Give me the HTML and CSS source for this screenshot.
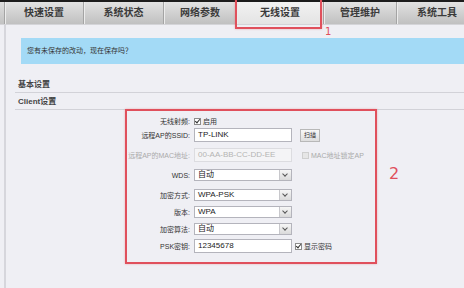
FILE: index.html
```html
<!DOCTYPE html>
<html>
<head>
    <meta charset="utf-8">
    <title>无线设置</title>
    <link rel="stylesheet" href="styles.css">
</head>
<body>
    <div class="topline"></div>
    <div class="tabs">
        <div class="tab t1">快速设置</div>
        <div class="tab t2">系统状态</div>
        <div class="tab t3">网络参数</div>
        <div class="tab t4 active">无线设置</div>
        <div class="tab t5">管理维护</div>
        <div class="tab t6">系统工具</div>
    </div>
    <div class="page">
        <div class="notice">您有未保存的改动，现在保存吗？</div>
        <div class="sec first">基本设置</div>
        <div class="sec">Client设置</div>
        <div class="form">
            <div class="row r1">
                <label>无线射频:</label>
                <span class="check on"></span><span class="txt">启用</span>
            </div>
            <div class="row r2">
                <label>远程AP的SSID:</label>
                <div class="input">TP-LINK</div>
                <div class="btn">扫描</div>
            </div>
            <div class="row sp">
                <label class="dis">远程AP的MAC地址:</label>
                <div class="input off">00-AA-BB-CC-DD-EE</div>
                <span class="check off mac"></span><span class="txt dis">MAC地址锁定AP</span>
            </div>
            <div class="row sp">
                <label>WDS:</label>
                <div class="select"><span>自动</span><i class="arrow"></i></div>
            </div>
            <div class="row sp">
                <label>加密方式:</label>
                <div class="select"><span>WPA-PSK</span><i class="arrow"></i></div>
            </div>
            <div class="row">
                <label>版本:</label>
                <div class="select"><span>WPA</span><i class="arrow"></i></div>
            </div>
            <div class="row">
                <label>加密算法:</label>
                <div class="select"><span>自动</span><i class="arrow"></i></div>
            </div>
            <div class="row">
                <label>PSK密钥:</label>
                <div class="input">12345678</div>
                <span class="check on psk"></span><span class="txt">显示密码</span>
            </div>
        </div>
    </div>

    <div class="mark box1"></div>
    <div class="num n1">1</div>
    <div class="mark box2"></div>
    <div class="num n2">2</div>
</body>
</html>
```

FILE: styles.css
```css
html, body {
    margin: 0;
    padding: 0;
}
body {
    width: 464px;
    height: 288px;
    overflow: hidden;
    background: #efeff4;
    font-family: "Liberation Sans", "Noto Sans CJK SC", sans-serif;
    color: #333;
    position: relative;
}
.topline {
    height: 2px;
    background: #1c1c1c;
}
.tabs {
    display: flex;
    height: 22px;
    padding-left: 4px;
    background: linear-gradient(#dedede, #c2c2c2);
    border-bottom: 1px solid #d4d4d8;
    overflow: hidden;
}
.tab {
    flex: none;
    height: 22px;
    line-height: 22px;
    text-align: center;
    font-size: 10px;
    font-weight: bold;
    color: #3a3a3a;
    border-left: 1px solid #a4a4a4;
    box-shadow: inset 1px 0 0 #ececec;
    background: linear-gradient(#e2e2e2, #c0c0c0);
}
.t1 { width: 78px; }
.t2 { width: 79px; }
.t3 { width: 72px; }
.t4 { width: 86px; }
.t5 { width: 72px; }
.t6 { width: 80px; }
.tab.active {
    background: linear-gradient(#f2f2f2, #e4e4e4);
}
.page {
    margin-left: 4px;
    border-left: 2px solid #d6d6dc;
    height: 264px;
    padding-top: 13px;
    box-sizing: border-box;
}
.notice {
    margin-left: 15px;
    height: 26px;
    line-height: 26px;
    padding-left: 6px;
    background: #a3daf6;
    font-size: 7px;
    color: #333;
}
.sec {
    margin-left: 9px;
    padding: 2px 0 0 3px;
    line-height: 14px;
    font-size: 8px;
    font-weight: bold;
    color: #444;
    border-bottom: 1px solid #d2d2d8;
}
.sec.first {
    margin-top: 14px;
    padding-top: 0;
}
.form {
    padding: 4px 0 0 114px;
    font-size: 7px;
}
.row {
    display: flex;
    align-items: center;
    height: 14px;
    margin-top: 3px;
}
.r1, .r2 {
    margin-top: 0;
}
.row.sp {
    margin-top: 6px;
}
.row label {
    width: 70px;
    margin-right: 4px;
    text-align: right;
    white-space: nowrap;
    color: #333;
}
.dis, .row label.dis {
    color: #aaa;
}
.input {
    width: 98px;
    height: 14px;
    box-sizing: border-box;
    border: 1px solid #b4b4bc;
    background: #fff;
    font-size: 8px;
    line-height: 12px;
    padding-left: 3px;
    color: #222;
}
.input.off {
    background: #f4f4f6;
    border-color: #dcdce0;
    color: #b4b4b4;
}
.select {
    width: 98px;
    height: 12px;
    box-sizing: border-box;
    border: 1px solid #b4b4bc;
    background: #fff;
    display: flex;
    font-size: 8px;
    line-height: 10px;
}
.select span {
    flex: 1;
    padding-left: 3px;
    color: #222;
}
.arrow {
    width: 11px;
    border-left: 1px solid #c8c8cc;
    background: linear-gradient(#f6f6f6, #dadada);
    position: relative;
}
.arrow::after {
    content: "";
    position: absolute;
    left: 3px;
    top: 2px;
    width: 3px;
    height: 3px;
    border-right: 1px solid #555;
    border-bottom: 1px solid #555;
    transform: rotate(45deg);
}
.btn {
    margin-left: 8px;
    width: 20px;
    height: 13px;
    box-sizing: border-box;
    border: 1px solid #b8b8b8;
    background: linear-gradient(#f8f8f8, #dedede);
    text-align: center;
    line-height: 11px;
    font-size: 6px;
}
.check {
    width: 7px;
    height: 7px;
    box-sizing: border-box;
    border: 1px solid #8c8c8c;
    background: #fff;
    position: relative;
    margin-right: 2px;
}
.check.on::after {
    content: "";
    position: absolute;
    left: 1px;
    top: -1px;
    width: 2px;
    height: 4px;
    border-right: 1px solid #333;
    border-bottom: 1px solid #333;
    transform: rotate(40deg);
}
.check.off {
    border-color: #cfcfcf;
    background: #e6e6e6;
}
.mac {
    margin-left: 10px;
}
.psk {
    margin-left: 3px;
}
.txt {
    white-space: nowrap;
}
.mark {
    position: absolute;
    border: 2px solid #e0505c;
    box-shadow: 0 0 2px rgba(224, 80, 92, 0.4);
}
.box1 {
    left: 235px;
    top: -2px;
    width: 83px;
    height: 27px;
}
.box2 {
    left: 125px;
    top: 109px;
    width: 248px;
    height: 151px;
}
.num {
    position: absolute;
    color: #e0505c;
    font-family: "DejaVu Sans", sans-serif;
}
.n1 {
    left: 325px;
    top: 26px;
    font-size: 10px;
}
.n2 {
    left: 389px;
    top: 164px;
    font-size: 16px;
}
```
